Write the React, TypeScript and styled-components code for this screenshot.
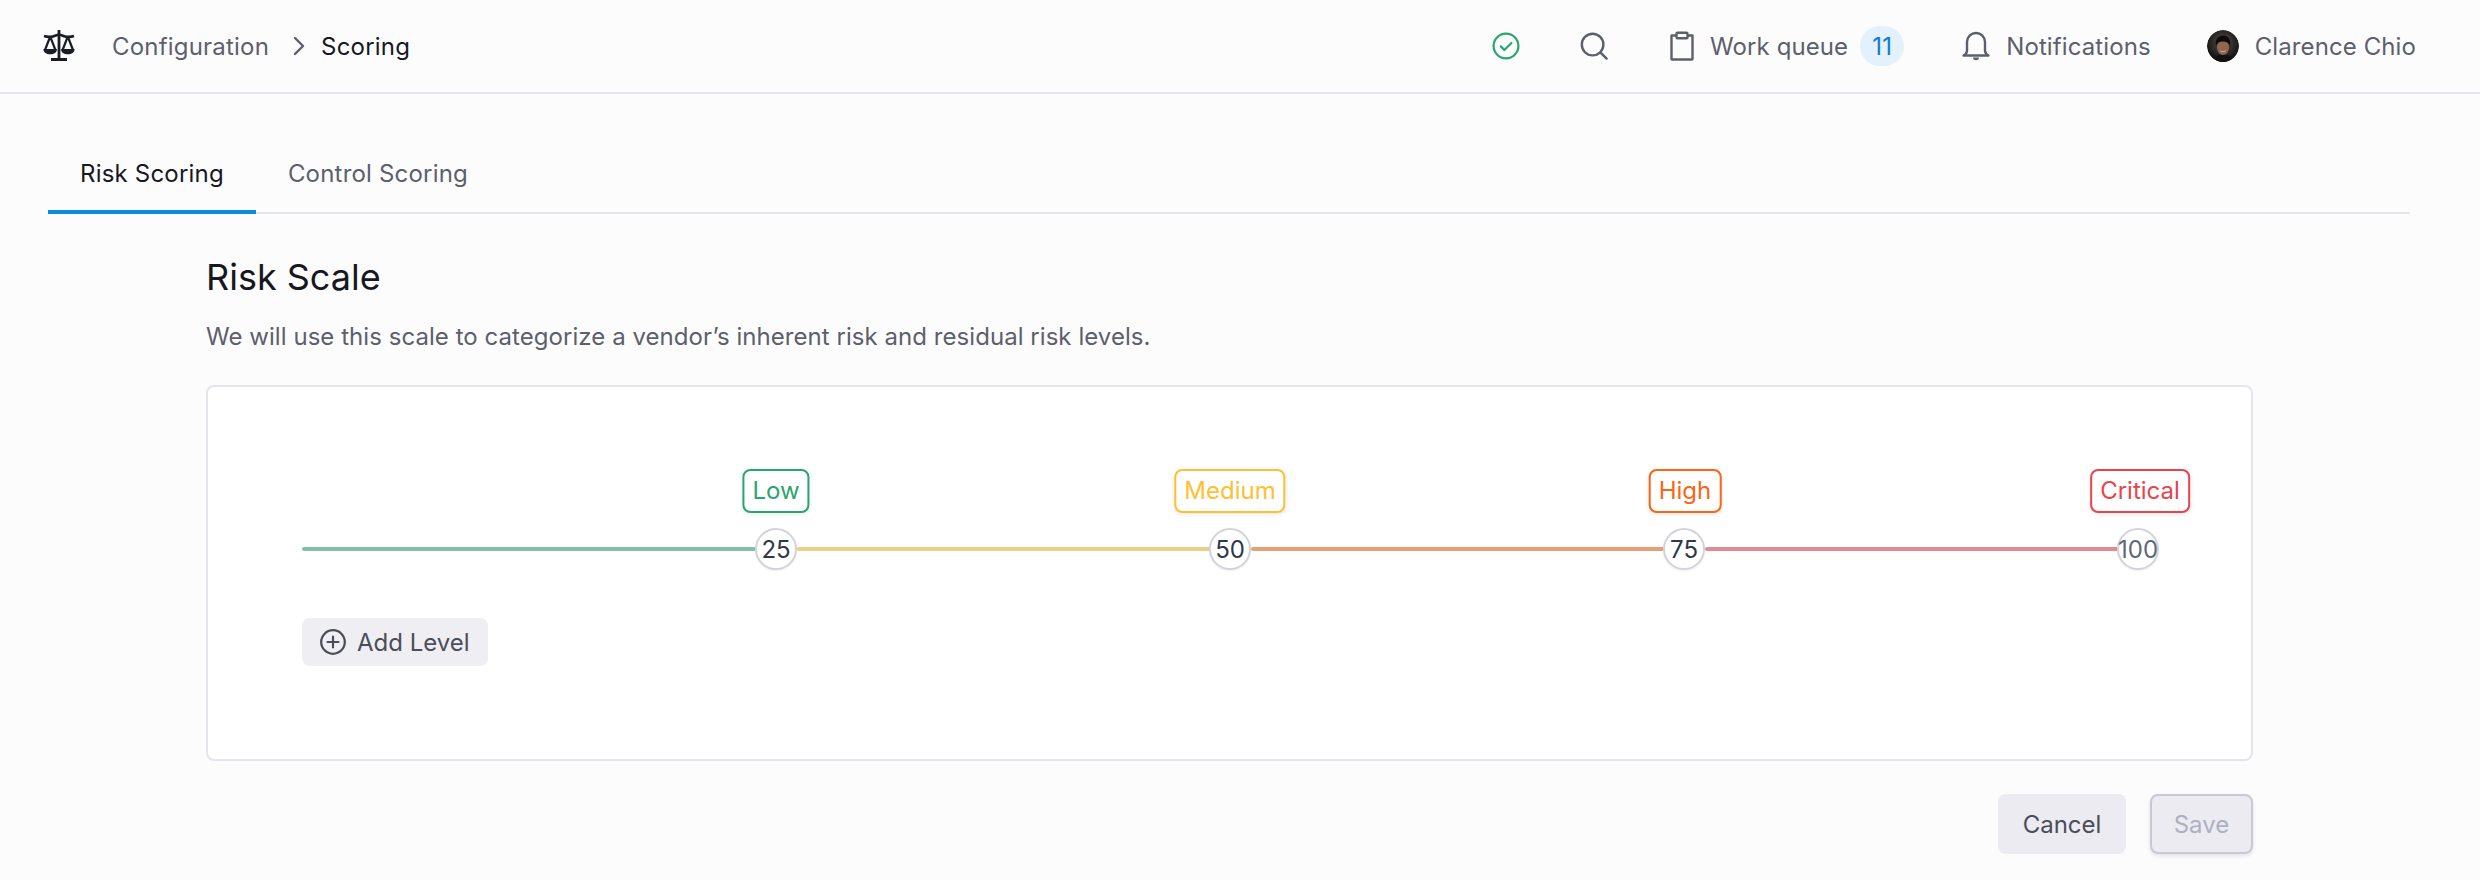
import React from 'react';
import styled, { createGlobalStyle } from 'styled-components';

const GlobalStyles = createGlobalStyle`
    html, body {
        margin     : 0;
        padding    : 0;
        background : #fcfcfd;
    }
    body {
        font-family    : Inter, "Noto Sans", sans-serif;
        font-size      : 24px;
        letter-spacing : 0.2px;
        color          : #5c5f6c;
    }
    * {
        box-sizing : border-box;
    }
`

type Level = {
    name: string
    value: number
    labelColor: string
    lineColor: string
    valueColor: string
    labelShift: number
}

const levels: Level[] = [
    { name: 'Low', value: 25, labelColor: '#2aa56d', lineColor: '#85bfa5', valueColor: '#2f384c', labelShift: 0 },
    { name: 'Medium', value: 50, labelColor: '#ffbe33', lineColor: '#ebcf8b', valueColor: '#2f384c', labelShift: 0 },
    { name: 'High', value: 75, labelColor: '#fb6514', lineColor: '#e5a077', valueColor: '#2f384c', labelShift: 1 },
    { name: 'Critical', value: 100, labelColor: '#e9434e', lineColor: '#df8d92', valueColor: '#5f6777', labelShift: 2 },
]

const ScaleLogo = () => (
    <svg width="32" height="32" viewBox="0 0 32 32" fill="none" stroke="#1b1d24" strokeWidth="2.2">
        <path d="M16 0v28" strokeWidth="2.8" />
        <path d="M8 29.5h16" strokeWidth="3" />
        <path d="M1 6c3 1 6 1.200 9 .4 2-.5 4-1.600 6-2 2 .4 4 1.500 6 2 3 .8 6 .6 9-.4" strokeWidth="2.6" />
        <path d="M7.200 6.500L2 20M7.200 6.500L12.400 20M24.800 6.500L19.600 20M24.800 6.500L30 20" />
        <path d="M.4 19h13.600c0 3.400-3 5.300-6.800 5.300S.4 22.400.4 19Z" fill="#1b1d24" stroke="none" />
        <path d="M18 19h13.600c0 3.400-3 5.300-6.800 5.300S18 22.400 18 19Z" fill="#1b1d24" stroke="none" />
    </svg>
)

const StatusIcon = () => (
    <svg width="28" height="28" viewBox="0 0 28 28" fill="none" stroke="#2aa56d" strokeWidth="2.200" strokeLinecap="round" strokeLinejoin="round">
        <circle cx="14" cy="14" r="12.400" />
        <path d="M8.800 14.400l3.600 3.600 7-7" />
    </svg>
)

const SearchIcon = () => (
    <svg width="28" height="28" viewBox="0 0 28 28" fill="none" stroke="#5c5f6c" strokeWidth="2.400" strokeLinecap="round">
        <circle cx="12.600" cy="12.600" r="10.800" />
        <path d="M20.600 20.600l6 6" />
    </svg>
)

const ClipboardIcon = () => (
    <svg width="26" height="30" viewBox="0 0 26 30" fill="none" stroke="#5c5f6c" strokeWidth="2.400" strokeLinejoin="round">
        <path d="M7.500 4.500H2.500v23.500a.5.5 0 0 0 .5.5h20a.5.5 0 0 0 .5-.5V4.500h-5" />
        <rect x="7.500" y="1.700" width="11" height="5.600" rx="1" />
    </svg>
)

const BellIcon = () => (
    <svg width="30" height="30" viewBox="0 0 30 30" fill="none" stroke="#5c5f6c" strokeWidth="2.400" strokeLinejoin="round">
        <path d="M2.500 24.500c2-1 3.500-2.500 3.500-5V11a9 9 0 0 1 18 0v8.500c0 2.500 1.500 4 3.500 5Z" />
        <path d="M12 26.500a3 2.800 0 0 0 6 0Z" fill="#5c5f6c" stroke="none" />
    </svg>
)

const PlusCircleIcon = () => (
    <svg width="26" height="26" viewBox="0 0 26 26" fill="none" stroke="#4a4d59" strokeWidth="2.200" strokeLinecap="round">
        <circle cx="13" cy="13" r="11.800" />
        <path d="M13 7.500v11M7.500 13h11" />
    </svg>
)

const AvatarPortrait = () => (
    <svg width="32" height="32" viewBox="0 0 32 32">
        <defs>
            <radialGradient id="avatarBg" cx="50%" cy="40%" r="62%">
                <stop offset="0%" stopColor="#57514e" />
                <stop offset="100%" stopColor="#0b0a0a" />
            </radialGradient>
        </defs>
        <circle cx="16" cy="16" r="16" fill="url(#avatarBg)" />
        <path d="M5 32c1-5 5-7.500 11-7.500S26 27 27 32Z" fill="#121010" />
        <ellipse cx="16" cy="17.500" rx="6" ry="7.500" fill="#8f6650" />
        <path d="M9 16c-1.500-7 3-10.500 7-10.500S24.500 9 23 16c-.8-3-3-4.500-7-4.500S9.800 13 9 16Z" fill="#0c0a0a" />
        <path d="M12.800 20.500c2 1 4.400 1 6.400 0-.8 1.800-5.600 1.800-6.400 0Z" fill="#e8dcd2" />
    </svg>
)

const App: React.FC = () => {
    return (
        <Page>
            <GlobalStyles />
            <TopBar>
                <Breadcrumbs>
                    <LogoSlot><ScaleLogo /></LogoSlot>
                    <Crumb>Configuration</Crumb>
                    <CrumbChevron viewBox="0 0 12 20" fill="none" stroke="#5c5f6c" strokeWidth="2.400" strokeLinecap="round" strokeLinejoin="round">
                        <path d="M2 2l8 8-8 8" />
                    </CrumbChevron>
                    <Crumb $current>Scoring</Crumb>
                </Breadcrumbs>
                <TopActions>
                    <IconSlot $width={88}><StatusIcon /></IconSlot>
                    <IconSlot $width={89}><SearchIcon /></IconSlot>
                    <ActionItem $gap={15} $marginRight={57}>
                        <ClipboardIcon />
                        <span>Work queue</span>
                        <CountBadge>11</CountBadge>
                    </ActionItem>
                    <ActionItem $gap={15} $marginRight={56}>
                        <BellIcon />
                        <span>Notifications</span>
                    </ActionItem>
                    <ActionItem $gap={16} $marginRight={0}>
                        <Avatar><AvatarPortrait /></Avatar>
                        <span>Clarence Chio</span>
                    </ActionItem>
                </TopActions>
            </TopBar>
            <Content>
                <TabList>
                    <Tab $active>Risk Scoring</Tab>
                    <Tab>Control Scoring</Tab>
                </TabList>
                <Section>
                    <Title>Risk Scale</Title>
                    <Description>We will use this scale to categorize a vendor’s inherent risk and residual risk levels.</Description>
                    <Card>
                        <Track>
                            {levels.map((level, i) => (
                                <Segment key={level.name} $first={i === 0}>
                                    <SegmentLine $color={level.lineColor} />
                                    <Handle $color={level.valueColor}>
                                        {level.value}
                                        <LevelLabel $color={level.labelColor} $shift={level.labelShift}>{level.name}</LevelLabel>
                                    </Handle>
                                </Segment>
                            ))}
                        </Track>
                        <AddLevelButton>
                            <PlusCircleIcon />
                            Add Level
                        </AddLevelButton>
                    </Card>
                    <Footer>
                        <CancelButton>Cancel</CancelButton>
                        <SaveButton disabled>Save</SaveButton>
                    </Footer>
                </Section>
            </Content>
        </Page>
    );
}

export default App;

const Page = styled.div`
    width      : 2480px;
    min-height : 880px;
    background : #fcfcfd;
`

const TopBar = styled.header`
    display         : flex;
    align-items     : center;
    justify-content : space-between;
    height          : 94px;
    padding         : 0 64px 0 43px;
    border-bottom   : 2px solid #e5e5eb;
`

const Breadcrumbs = styled.nav`
    display     : flex;
    align-items : center;
`

const LogoSlot = styled.div`
    display      : flex;
    width        : 32px;
    margin-right : 37px;
`

const Crumb = styled.span<{ $current?: boolean }>`
    color : ${p => (p.$current ? '#17181f' : '#5c5f6c')};
`

const CrumbChevron = styled.svg`
    width  : 12px;
    height : 20px;
    margin : 0 16px 0 24px;
`

const TopActions = styled.div`
    display        : flex;
    align-items    : center;
    letter-spacing : 0.1px;
`

const IconSlot = styled.div<{ $width: number }>`
    display : flex;
    width   : ${p => p.$width}px;
`

const ActionItem = styled.div<{ $gap: number; $marginRight: number }>`
    display      : flex;
    align-items  : center;
    gap          : ${p => p.$gap}px;
    margin-right : ${p => p.$marginRight}px;
`

const CountBadge = styled.span`
    display         : flex;
    align-items     : center;
    justify-content : center;
    width           : 44px;
    height          : 40px;
    margin-left     : -3px;
    border-radius   : 20px;
    background      : #e3f1fd;
    color           : #0f7ccf;
`

const Avatar = styled.div`
    display       : flex;
    width         : 32px;
    height        : 32px;
    border-radius : 50%;
    overflow      : hidden;
`

const Content = styled.main`
    padding : 48px 70px 0 48px;
`

const TabList = styled.div`
    display       : flex;
    border-bottom : 2px solid #e5e5eb;
`

const Tab = styled.div<{ $active?: boolean }>`
    padding       : 16px 32px 20px;
    margin-bottom : -2px;
    line-height   : 32px;
    color         : ${p => (p.$active ? '#17181f' : '#5c5f6c')};
    border-bottom : 4px solid ${p => (p.$active ? '#0a8cdc' : 'transparent')};
`

const Section = styled.section`
    width  : 2047px;
    margin : 41px 0 0 158px;
`

const Title = styled.h1`
    margin         : 0;
    font-size      : 36px;
    font-weight    : 400;
    line-height    : 44px;
    letter-spacing : 0;
    color          : #17181f;
`

const Description = styled.p`
    margin         : 22px 0 32px;
    line-height    : 32px;
    letter-spacing : 0.05px;
`

const Card = styled.div`
    height        : 376px;
    padding       : 141px 92px 0 94px;
    background    : #ffffff;
    border        : 2px solid #e5e5eb;
    border-radius : 8px;
`

const Track = styled.div`
    display : flex;
`

const Segment = styled.div<{ $first?: boolean }>`
    display     : flex;
    align-items : center;
    flex        : ${p => (p.$first ? '0 0 495px' : '1 1 0')};
`

const SegmentLine = styled.div<{ $color: string }>`
    flex          : 1;
    height        : 4px;
    border-radius : 2px 0 0 2px;
    background    : ${p => p.$color};
`

const Handle = styled.div<{ $color: string }>`
    position        : relative;
    display         : flex;
    align-items     : center;
    justify-content : center;
    flex            : none;
    width           : 42px;
    height          : 42px;
    border-radius   : 50%;
    border          : 2px solid #d3d3dc;
    background      : #ffffff;
    box-shadow      : 0 1px 2px rgba(20, 20, 40, 0.08);
    color           : ${p => p.$color};
    letter-spacing  : 0;
    white-space     : nowrap;
`

const LevelLabel = styled.div<{ $color: string; $shift: number }>`
    position       : absolute;
    bottom         : calc(100% + 17px);
    left           : calc(50% + ${p => p.$shift}px);
    transform      : translateX(-50%);
    height         : 44px;
    padding        : 0 8px;
    line-height    : 40px;
    letter-spacing : 0;
    background     : #ffffff;
    border         : 2px solid ${p => p.$color};
    border-radius  : 8px;
    box-shadow     : 0 2px 4px rgba(20, 20, 40, 0.08);
    color          : ${p => p.$color};
`

const AddLevelButton = styled.button`
    display       : flex;
    align-items   : center;
    gap           : 11px;
    height        : 48px;
    margin-top    : 48px;
    padding       : 0 18px;
    border        : 0;
    border-radius : 8px;
    background    : #efeff3;
    font          : inherit;
    color         : #4a4d59;
`

const Footer = styled.div`
    display         : flex;
    justify-content : flex-end;
    gap             : 24px;
    margin-top      : 33px;
`

const CancelButton = styled.button`
    width         : 128px;
    height        : 60px;
    border        : 0;
    border-radius : 8px;
    background    : #ecebf1;
    font          : inherit;
    color         : #4a4d59;
`

const SaveButton = styled.button`
    width         : 103px;
    height        : 60px;
    border        : 2px solid #c9c9d6;
    border-radius : 8px;
    background    : #ecebf1;
    box-shadow    : 0 2px 4px rgba(20, 20, 40, 0.1);
    font          : inherit;
    color         : #aeb0bf;
`
